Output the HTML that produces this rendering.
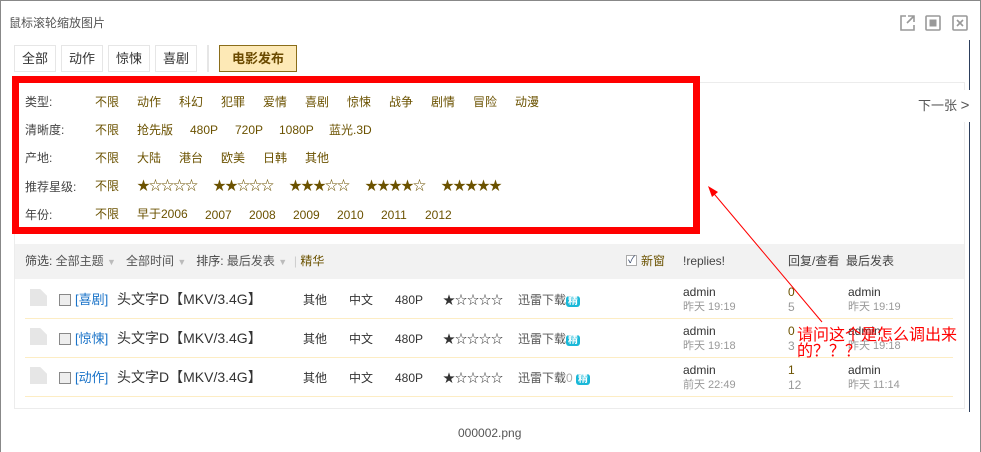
<!DOCTYPE html>
<html><head><meta charset="utf-8"><style>
*{margin:0;padding:0;box-sizing:border-box}
body{width:981px;height:452px;background:#fff;position:relative;overflow:hidden;font-family:"Liberation Sans","Noto Sans CJK SC",sans-serif;font-size:12px;color:#333;line-height:16px}
.a{position:absolute;white-space:nowrap;line-height:16px}
.btn{position:absolute;top:45px;height:27px;border:1px solid #e6e6e6;background:#fff;font-size:13px;line-height:25px;text-align:center;color:#333}
.g{color:#6b5200}
.lb{color:#444}
.star{color:#6b5200;font-size:13px;letter-spacing:-1px}
.gr{color:#999}
.sep{position:absolute;left:25px;width:928px;height:1px;background:#fdedc4}
.doc{position:absolute;width:17px;height:17px;background:#e6e6e6;clip-path:polygon(0 0,60% 0,100% 40%,100% 100%,0 100%)}
.cb{position:absolute;width:12px;height:12px;border:1px solid #888;background:#eee}
.jh{background:#19b8d8;color:#fff;font-size:10px;border-radius:3px;padding:0 2px;font-weight:bold}
</style></head><body>
<div class="a" style="left:0;top:0;width:981px;height:452px;border:1px solid #888;border-bottom:none"></div>
<div class="a" style="left:9px;top:15px;font-size:12px;color:#555">鼠标滚轮缩放图片</div>
<svg class="a" style="left:898px;top:14px" width="75" height="18" viewBox="0 0 75 18">
<g fill="none" stroke="#999" stroke-width="1.6">
<path d="M8 2H3V16H16V11"/><path d="M10 2H16V8M16 2L9 9"/>
<rect x="28" y="2" width="14" height="14" rx="1"/>
<rect x="55" y="2" width="14" height="14" rx="1"/><path d="M59 6L65 12M65 6L59 12"/>
</g><rect x="31.5" y="5.5" width="7" height="7" fill="#999"/></svg>
<div class="a" style="left:969px;top:40px;width:1px;height:372px;background:#2c3e5c"></div>
<div class="btn" style="left:14px;width:42px">全部</div>
<div class="btn" style="left:61px;width:42px">动作</div>
<div class="btn" style="left:108px;width:42px">惊悚</div>
<div class="btn" style="left:155px;width:42px">喜剧</div>
<div class="a" style="left:207px;top:45px;width:2px;height:27px;background:#e6e6e6"></div>
<div class="btn" style="left:219px;width:78px;background:#fde9b6;border-color:#8a6d1a;color:#6b4a00;font-weight:bold">电影发布</div>
<div class="a" style="left:14px;top:82px;width:951px;height:327px;border:1px solid #ececec"></div>
<div class="a" style="left:906px;top:90px;background:#fff;width:66px;height:32px"></div>
<div class="a" style="left:918px;top:98px;font-size:13px;color:#555">下一张 <span style="font-size:15px">&gt;</span></div>
<div class="a" style="left:12px;top:76px;width:688px;height:158px;border:7px solid #f00"></div>
<div class="a lb" style="left:25px;top:94px">类型:</div>
<div class="a g" style="left:95px;top:94px">不限</div>
<div class="a g" style="left:137px;top:94px">动作</div><div class="a g" style="left:179px;top:94px">科幻</div><div class="a g" style="left:221px;top:94px">犯罪</div><div class="a g" style="left:263px;top:94px">爱情</div><div class="a g" style="left:305px;top:94px">喜剧</div><div class="a g" style="left:347px;top:94px">惊悚</div><div class="a g" style="left:389px;top:94px">战争</div><div class="a g" style="left:431px;top:94px">剧情</div><div class="a g" style="left:473px;top:94px">冒险</div><div class="a g" style="left:515px;top:94px">动漫</div>
<div class="a lb" style="left:25px;top:122px">清晰度:</div>
<div class="a g" style="left:95px;top:122px">不限</div><div class="a g" style="left:137px;top:122px">抢先版</div><div class="a g" style="left:190px;top:122px">480P</div><div class="a g" style="left:235px;top:122px">720P</div><div class="a g" style="left:279px;top:122px">1080P</div><div class="a g" style="left:329px;top:122px">蓝光.3D</div>
<div class="a lb" style="left:25px;top:150px">产地:</div>
<div class="a g" style="left:95px;top:150px">不限</div><div class="a g" style="left:137px;top:150px">大陆</div><div class="a g" style="left:179px;top:150px">港台</div><div class="a g" style="left:221px;top:150px">欧美</div><div class="a g" style="left:263px;top:150px">日韩</div><div class="a g" style="left:305px;top:150px">其他</div>
<div class="a lb" style="left:25px;top:179px">推荐星级:</div>
<div class="a g" style="left:95px;top:178px">不限</div>
<div class="a star" style="left:137px;top:178px">★☆☆☆☆</div><div class="a star" style="left:213px;top:178px">★★☆☆☆</div><div class="a star" style="left:289px;top:178px">★★★☆☆</div><div class="a star" style="left:365px;top:178px">★★★★☆</div><div class="a star" style="left:441px;top:178px">★★★★★</div>
<div class="a lb" style="left:25px;top:207px">年份:</div>
<div class="a g" style="left:95px;top:206px">不限</div><div class="a g" style="left:137px;top:206px">早于2006</div><div class="a g" style="left:205px;top:207px">2007</div><div class="a g" style="left:249px;top:207px">2008</div><div class="a g" style="left:293px;top:207px">2009</div><div class="a g" style="left:337px;top:207px">2010</div><div class="a g" style="left:381px;top:207px">2011</div><div class="a g" style="left:425px;top:207px">2012</div>
<div class="a" style="left:15px;top:244px;width:949px;height:35px;background:#f2f2f2"></div>
<div class="a" style="left:25px;top:253px;color:#444">筛选: <span style="color:#555">全部主题</span> <span style="color:#bbb;font-size:9px">▼</span>&nbsp;&nbsp; <span style="color:#555">全部时间</span> <span style="color:#bbb;font-size:9px">▼</span>&nbsp;&nbsp; 排序: <span style="color:#555">最后发表</span> <span style="color:#bbb;font-size:9px">▼</span>&nbsp;&nbsp;<span style="color:#ccc">|</span> <span class="g">精华</span></div>
<div class="a" style="left:626px;top:255px;width:11px;height:11px;border:1px solid #aaa;background:#fff;color:#346;font-size:10px;line-height:9px;text-align:center">✓</div>
<div class="a g" style="left:641px;top:253px">新窗</div>
<div class="a" style="left:683px;top:253px;color:#444">!replies!</div>
<div class="a" style="left:788px;top:253px;color:#444">回复/查看&nbsp; 最后发表</div>

<div class="sep" style="top:318px"></div><div class="sep" style="top:357px"></div><div class="sep" style="top:396px"></div>

<div class="doc" style="left:30px;top:289px"></div>
<div class="cb" style="left:59px;top:294px"></div>
<div class="a" style="left:75px;top:292px;color:#1a73c8;font-size:13px">[喜剧]</div>
<div class="a" style="left:117px;top:291px;font-size:14px;color:#333">头文字D【MKV/3.4G】</div>
<div class="a" style="left:303px;top:292px">其他</div><div class="a" style="left:349px;top:292px">中文</div><div class="a" style="left:395px;top:292px">480P</div><div class="a" style="left:443px;top:292px">★☆☆☆☆</div>
<div class="a" style="left:518px;top:292px;color:#555">迅雷下载<span class="jh">精</span></div>
<div class="a" style="left:683px;top:284px;color:#333">admin</div><div class="a gr" style="left:683px;top:299px;font-size:11px">昨天 19:19</div>
<div class="a g" style="left:788px;top:284px">0</div><div class="a gr" style="left:788px;top:299px">5</div>
<div class="a" style="left:848px;top:284px">admin</div><div class="a gr" style="left:848px;top:299px;font-size:11px">昨天 19:19</div>

<div class="doc" style="left:30px;top:328px"></div>
<div class="cb" style="left:59px;top:333px"></div>
<div class="a" style="left:75px;top:331px;color:#1a73c8;font-size:13px">[惊悚]</div>
<div class="a" style="left:117px;top:330px;font-size:14px;color:#333">头文字D【MKV/3.4G】</div>
<div class="a" style="left:303px;top:331px">其他</div><div class="a" style="left:349px;top:331px">中文</div><div class="a" style="left:395px;top:331px">480P</div><div class="a" style="left:443px;top:331px">★☆☆☆☆</div>
<div class="a" style="left:518px;top:331px;color:#555">迅雷下载<span class="jh">精</span></div>
<div class="a" style="left:683px;top:323px">admin</div><div class="a gr" style="left:683px;top:338px;font-size:11px">昨天 19:18</div>
<div class="a g" style="left:788px;top:323px">0</div><div class="a gr" style="left:788px;top:338px">3</div>
<div class="a" style="left:848px;top:323px">admin</div><div class="a gr" style="left:848px;top:338px;font-size:11px">昨天 19:18</div>

<div class="doc" style="left:30px;top:367px"></div>
<div class="cb" style="left:59px;top:372px"></div>
<div class="a" style="left:75px;top:370px;color:#1a73c8;font-size:13px">[动作]</div>
<div class="a" style="left:117px;top:369px;font-size:14px;color:#333">头文字D【MKV/3.4G】</div>
<div class="a" style="left:303px;top:370px">其他</div><div class="a" style="left:349px;top:370px">中文</div><div class="a" style="left:395px;top:370px">480P</div><div class="a" style="left:443px;top:370px">★☆☆☆☆</div>
<div class="a" style="left:518px;top:370px;color:#555">迅雷下载<span style="color:#aaa">0</span> <span class="jh">精</span></div>
<div class="a" style="left:683px;top:362px">admin</div><div class="a gr" style="left:683px;top:377px;font-size:11px">前天 22:49</div>
<div class="a g" style="left:788px;top:362px">1</div><div class="a gr" style="left:788px;top:377px">12</div>
<div class="a" style="left:848px;top:362px">admin</div><div class="a gr" style="left:848px;top:377px;font-size:11px">昨天 11:14</div>

<svg class="a" style="left:700px;top:180px" width="240" height="160"><path d="M10 9L122 142" stroke="#f00" stroke-width="1"/><path d="M8 6L18 12L12 17Z" fill="#f00"/></svg>
<div class="a" style="left:797px;top:328px;color:#f00;font-size:16px;line-height:16px">请问这个是怎么调出来<br>的？？？</div>
<div class="a" style="left:458px;top:425px;color:#555">000002.png</div>
</body></html>
